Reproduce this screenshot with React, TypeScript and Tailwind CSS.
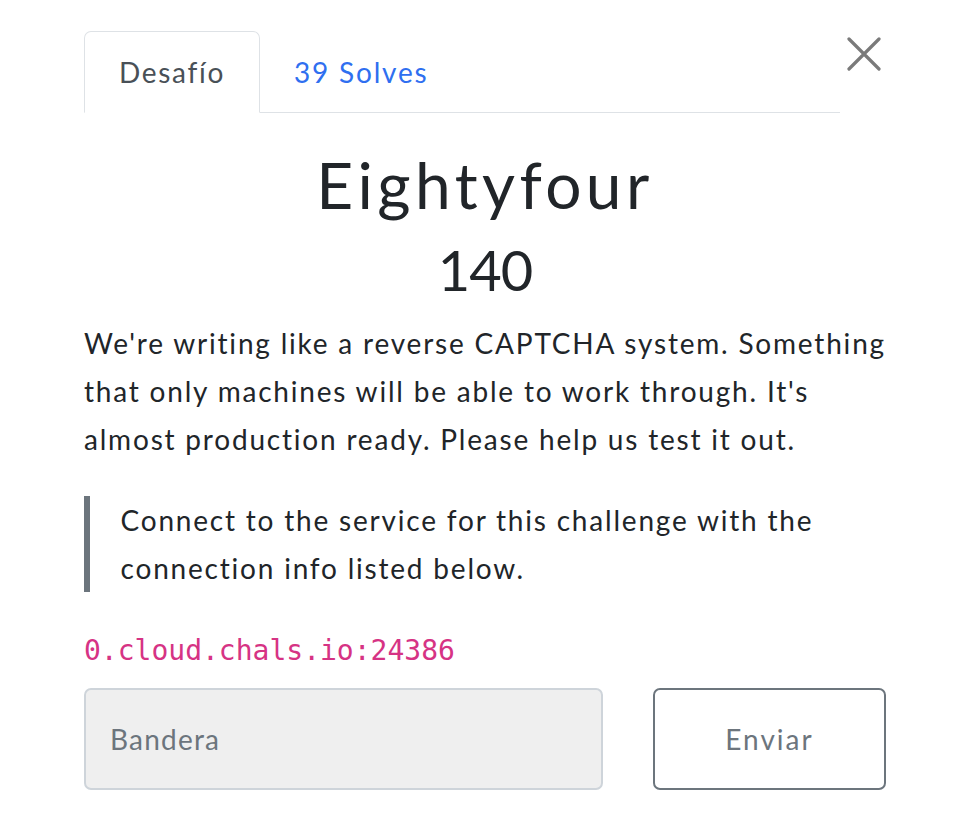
import React from "react";

export default function App() {
  return (
    <div className="min-h-[834px] w-[970px] bg-white text-[#212529] tracking-[1.8px]" style={{ fontFamily: "Lato, 'Open Sans', sans-serif" }}>
      <div className="pl-[84px] pr-[84px] pt-[31px]">
        <div className="flex items-start">
          <div className="flex flex-1 border-b border-[#dee2e6]">
            <div className="-mb-px flex h-[82px] items-center rounded-t-[7px] border border-[#dee2e6] border-b-white bg-white px-[34px] text-[28px] tracking-[1.7px] text-[#495057]">
              Desafío
            </div>
            <div className="flex h-[81px] items-center px-[34px] text-[28px] text-[#2f6ff0]">39 Solves</div>
          </div>
          <div className="ml-[2px] flex h-[46px] w-[44px] items-center justify-center">
            <svg width="34" height="34" viewBox="0 0 34 34">
              <path d="M2 2 L32 32 M32 2 L2 32" stroke="#7a7a7a" strokeWidth="3.2" strokeLinecap="round" />
            </svg>
          </div>
        </div>

        <h1 className="mt-[24px] text-center text-[64px] leading-[96px] tracking-[4.4px]">Eightyfour</h1>
        <div className="-mt-[5px] text-center text-[56px] leading-[84px] tracking-[-1px]">140</div>

        <p className="mt-[7px] text-[28px] leading-[48px]">
          We're writing like a reverse CAPTCHA system. Something that only machines will be able to work through. It's almost production ready. Please help us test it out.
        </p>

        <div className="mt-[33px] flex">
          <div className="w-[8px] bg-[#6c757d]" />
          <p className="pl-[31px] text-[28px] leading-[48px]">
            Connect to the service for this challenge with the connection info listed below.
          </p>
        </div>

        <div
          className="mt-[39px] text-[28px] leading-[40px] tracking-normal text-[#d63384]"
          style={{ fontFamily: "'DejaVu Sans Mono', 'Liberation Mono', monospace" }}
        >
          0.cloud.chals.io:24386
        </div>

        <div className="mt-[17px] flex gap-[50px]">
          <div className="flex h-[102px] w-[519px] items-center rounded-[7px] border-2 border-[#ced4da] bg-[#efefef] px-[24px] text-[28px] tracking-[1.2px] text-[#6c757d]">
            Bandera
          </div>
          <div className="flex h-[102px] flex-1 items-center justify-center rounded-[7px] border-2 border-[#6c757d] text-[28px] tracking-[2px] text-[#6c757d]">
            Enviar
          </div>
        </div>
      </div>
    </div>
  );
}
